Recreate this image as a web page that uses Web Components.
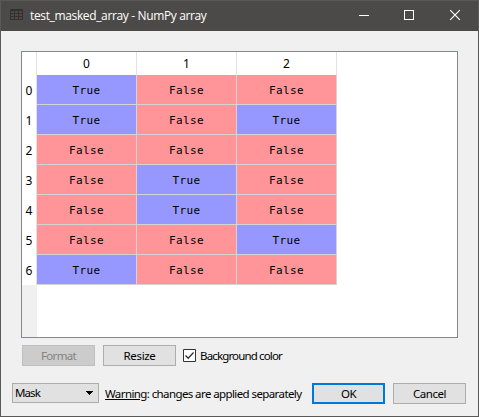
<!DOCTYPE html>
<html lang="en"><head><meta charset="utf-8"><title>test_masked_array - NumPy array</title>
<style>html,body{margin:0;height:100%;overflow:hidden}</style></head>
<body>
<array-dialog></array-dialog>
<script>
const define=(name,html,setup)=>customElements.define(name,class extends HTMLElement{
  connectedCallback(){
    if(this.shadowRoot)return;
    this.attachShadow({mode:'open'}).innerHTML=html;
    if(setup)setup(this,this.shadowRoot);
  }
});

// A single line of text whose tracking is adjusted to fill the given width.
define('fit-text',`<style>:host{display:inline-block;white-space:nowrap;flex:none}span{display:inline-block}</style><span><slot></slot></span>`,(el,root)=>{
  const s=root.querySelector('span'),w=+el.getAttribute('width');
  const n=el.textContent.length,natural=s.getBoundingClientRect().width;
  s.style.letterSpacing=((w-natural)/n).toFixed(3)+'px';
});

define('title-bar',`<style>
:host{display:flex;box-sizing:border-box;height:31px;background:#4c4a48;border-top:1px solid #5a5957;color:#fff;font:12px "Open Sans","Noto Sans",sans-serif;align-items:center;padding-left:9px}
svg{display:block;flex:none}.t{margin-left:7px;flex:1;line-height:30px}
</style>
<svg width="13" height="11" viewBox="0 0 13 11" style="margin-top:-3px" shape-rendering="crispEdges"><path fill="#333231" fill-rule="evenodd" d="M0 0h13v11H0zM1 2v2h3V2zM5 2v2h3V2zM9 2v2h3V2zM1 5v2h3V5zM5 5v2h3V5zM9 5v2h3V5zM1 8v2h3V8zM5 8v2h3V8zM9 8v2h3V8z"/></svg>
<div class="t"><fit-text width="176.500">test_masked_array - NumPy array</fit-text></div>
<svg width="120" height="30" viewBox="0 0 120 30" fill="none" stroke="#fff"><path d="M1 14.500h10M46.500 9.500h9v9h-9z" shape-rendering="crispEdges"/><path d="M92.200 9.200l9.600 9.600M101.800 9.200l-9.600 9.600" stroke-width="1.200"/></svg>`);

define('push-button',`<style>
:host{box-sizing:border-box;display:flex;align-items:center;justify-content:center;width:73px;height:21px;border:1px solid #adadad;background:#e1e1e1;line-height:19px}
:host([disabled]){background:#ccc;border-color:#bfbfbf;color:#838383}
:host([default]){border:2px solid #0078d7;line-height:17px}
</style><slot></slot>`);

define('check-box',`<style>:host{display:flex;align-items:center;gap:4px}svg{display:block}</style>
<svg width="13" height="13" viewBox="0 0 13 13"><path d="M.5.5h12v12H.5z" fill="#fff" stroke="#333"/><path d="M2.500 6.500l2.700 2.800L10.500 3.500" fill="none" stroke="#333" stroke-width="1.300"/></svg><slot></slot>`);

define('combo-box',`<style>:host{box-sizing:border-box;display:flex;align-items:center;justify-content:space-between;width:87px;height:20px;border:1px solid #adadad;background:#e1e1e1;padding:0 5px 0 2px;line-height:20px}svg{display:block}</style>
<slot></slot><svg width="7" height="4" viewBox="0 0 7 4" shape-rendering="crispEdges"><path d="M0 0h7v1H6v1H5v1H4v1H3V3H2V2H1V1H0z"/></svg>`);

define('bool-cell',`<style>:host{background:#ff9499;border:solid #d4d4d4;border-width:0 1px 1px 0;box-sizing:border-box;padding-top:2px;display:flex;align-items:center;justify-content:center;font:11px/27px "DejaVu Sans Mono",monospace;letter-spacing:.38px}
:host([on]){background:#9698ff}</style><slot></slot>`);

define('array-view',`<style>
:host{box-sizing:border-box;display:block;width:437px;height:287px;border:1px solid #828790;background:linear-gradient(90deg,#f0f0f0 15px,#fff 15px)}
.g{display:grid;grid-template-columns:15px repeat(3,100px);grid-template-rows:23px repeat(7,30px);width:315px;background:#fff;font-size:12px}
.h{display:flex;align-items:center;justify-content:center;border-right:1px solid #e2e2e2;box-sizing:border-box}
.r{line-height:30px;padding-top:1px}
</style><div class="g"></div>`,(el,root)=>{
  const rows=['100','101','000','010','010','001','100'];
  root.querySelector('.g').innerHTML='<div class="h"></div>'+[0,1,2].map(i=>`<div class="h">${i}</div>`).join('')+
    rows.map((r,i)=>`<div class="h r">${i}</div>`+[...r].map(c=>`<bool-cell${c==='1'?' on':''}>${c==='1'?'True':'False'}</bool-cell>`).join('')).join('');
});

define('array-dialog',`<style>
:host{display:flex;flex-direction:column;box-sizing:border-box;width:479px;height:417px;border:solid #5a5957;border-width:0 1px 1px;background:#f0f0f0;color:#000;font:11.5px "Noto Sans",sans-serif}
array-view{margin:20px 0 0 20px;flex:none}
.a{display:flex;align-items:center;margin:7px 0 0 21px;height:21px}
.b{display:flex;align-items:flex-start;margin:17px 0 0 11px;height:21px}
.w{margin-left:6px;width:207px;line-height:21px}u{text-underline-offset:1px}
</style>
<title-bar></title-bar><array-view></array-view>
<div class="a"><push-button disabled><fit-text width="35">Format</fit-text></push-button><push-button style="margin:0 7px 0 8px"><fit-text width="32">Resize</fit-text></push-button><check-box><fit-text width="82">Background color</fit-text></check-box></div>
<div class="b"><combo-box><fit-text width="25">Mask</fit-text></combo-box><div class="w"><fit-text width="196.500"><u>Warning</u>: changes are applied separately</fit-text></div><push-button default><fit-text width="15">OK</fit-text></push-button><push-button style="margin-left:8px"><fit-text width="33">Cancel</fit-text></push-button></div>`);
</script></body></html>
